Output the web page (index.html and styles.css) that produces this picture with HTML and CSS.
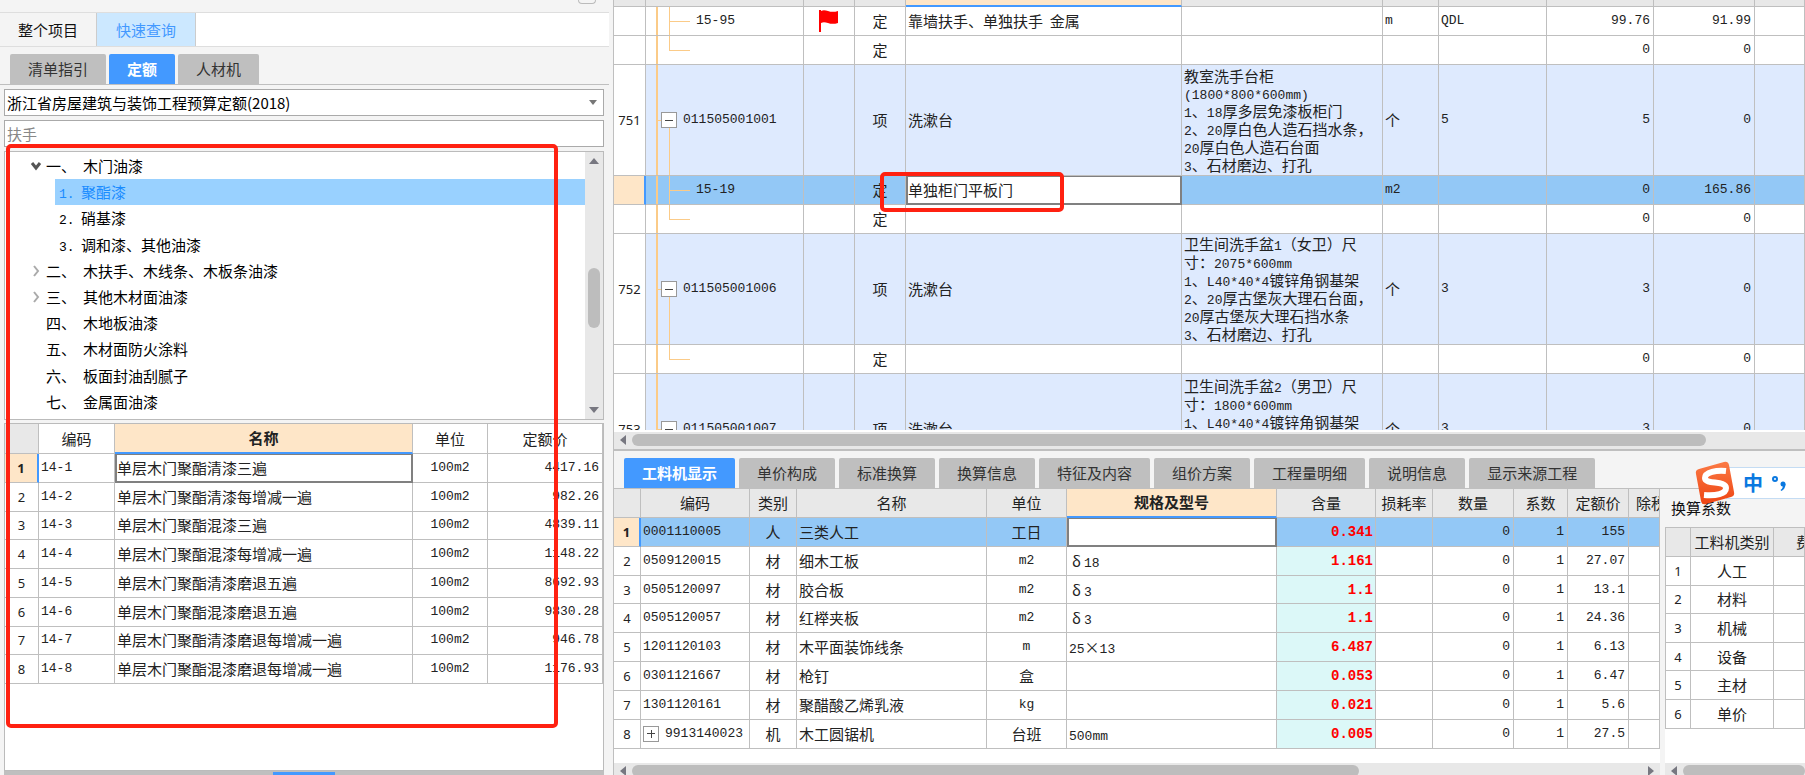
FILE: index.html
```html
<!DOCTYPE html>
<html lang="zh-CN">
<head>
<meta charset="utf-8">
<title>快速查询</title>
<link rel="stylesheet" href="styles.css">
</head>
<body>
<div class="app">
  <aside class="side">
    <div class="side-top"><button class="pin" aria-label="固定"></button></div>
    <nav class="modes">
      <button class="mode">整个项目</button>
      <button class="mode mode-on">快速查询</button>
    </nav>
    <nav class="tabs tabs-side">
      <button class="tab">清单指引</button>
      <button class="tab tab-on">定额</button>
      <button class="tab">人材机</button>
    </nav>
    <div class="side-body">
      <div class="picker">
        <select class="field" aria-label="定额库"><option>浙江省房屋建筑与装饰工程预算定额(2018)</option></select>
        <svg class="picker-arrow" width="8" height="5" viewBox="0 0 8 5"><path d="M0 0h8L4 5z" fill="#777"/></svg>
      </div>
      <input class="field" type="text" placeholder="扶手" aria-label="搜索">
      <div class="tree-box">
        <ul class="tree">
          <li><svg class="chev" viewBox="0 0 12 12"><path d="M2 3l4 5 4-5" fill="none" stroke="#555" stroke-width="3"/></svg><span class="ord">一、</span>木门油漆</li>
          <li class="leaf leaf-on"><span class="ord"><span class="n">1.</span></span>聚酯漆</li>
          <li class="leaf"><span class="ord"><span class="n">2.</span></span>硝基漆</li>
          <li class="leaf"><span class="ord"><span class="n">3.</span></span>调和漆、其他油漆</li>
          <li><svg class="chev" viewBox="0 0 12 12"><path d="M4 1l4 5-4 5" fill="none" stroke="#aaa" stroke-width="2"/></svg><span class="ord">二、</span>木扶手、木线条、木板条油漆</li>
          <li><svg class="chev" viewBox="0 0 12 12"><path d="M4 1l4 5-4 5" fill="none" stroke="#aaa" stroke-width="2"/></svg><span class="ord">三、</span>其他木材面油漆</li>
          <li><span class="chev"></span><span class="ord">四、</span>木地板油漆</li>
          <li><span class="chev"></span><span class="ord">五、</span>木材面防火涂料</li>
          <li><span class="chev"></span><span class="ord">六、</span>板面封油刮腻子</li>
          <li><span class="chev"></span><span class="ord">七、</span>金属面油漆</li>
        </ul>
        <div class="vbar">
          <svg width="10" height="6" viewBox="0 0 10 6"><path d="M0 6h10L5 0z" fill="#777780"/></svg>
          <div class="vtrack"><div class="vthumb"></div></div>
          <svg width="10" height="6" viewBox="0 0 10 6"><path d="M0 0h10L5 6z" fill="#777780"/></svg>
        </div>
      </div>
      <div class="quota-box">
        <table class="grid grid-quota">
          <colgroup><col class="w34"><col class="w76"><col><col class="w75"><col class="w115"></colgroup>
          <thead><tr><th class="corner"></th><th>编码</th><th class="col-on">名称</th><th>单位</th><th>定额价</th></tr></thead>
          <tbody>
            <tr><td class="no no-on">1</td><td class="n">14-1</td><td class="cell-on">单层木门聚酯清漆三遍</td><td class="n c">100m2</td><td class="n r">4417.16</td></tr>
            <tr><td class="no">2</td><td class="n">14-2</td><td>单层木门聚酯清漆每增减一遍</td><td class="n c">100m2</td><td class="n r">982.26</td></tr>
            <tr><td class="no">3</td><td class="n">14-3</td><td>单层木门聚酯混漆三遍</td><td class="n c">100m2</td><td class="n r">4839.11</td></tr>
            <tr><td class="no">4</td><td class="n">14-4</td><td>单层木门聚酯混漆每增减一遍</td><td class="n c">100m2</td><td class="n r">1148.22</td></tr>
            <tr><td class="no">5</td><td class="n">14-5</td><td>单层木门聚酯清漆磨退五遍</td><td class="n c">100m2</td><td class="n r">8692.93</td></tr>
            <tr><td class="no">6</td><td class="n">14-6</td><td>单层木门聚酯混漆磨退五遍</td><td class="n c">100m2</td><td class="n r">9830.28</td></tr>
            <tr><td class="no">7</td><td class="n">14-7</td><td>单层木门聚酯清漆磨退每增减一遍</td><td class="n c">100m2</td><td class="n r">946.78</td></tr>
            <tr><td class="no">8</td><td class="n">14-8</td><td>单层木门聚酯混漆磨退每增减一遍</td><td class="n c">100m2</td><td class="n r">1176.93</td></tr>
          </tbody>
        </table>
      </div>
      <div class="side-foot"><span class="grip"></span></div>
    </div>
    <div class="mark mark-side"></div>
  </aside>

  <main class="main">
    <section class="upper">
      <div class="clip">
        <table class="grid grid-bill">
          <colgroup><col class="w32"><col class="w158"><col class="w51"><col class="w51"><col class="w276"><col class="w201"><col class="w56"><col class="w108"><col class="w107"><col class="w101"><col></colgroup>
          <thead><tr><th></th><th></th><th></th><th></th><th class="col-on"></th><th></th><th></th><th></th><th></th><th></th><th></th></tr></thead>
          <tbody>
            <tr><td></td><td class="n kid">15-95</td><td class="c"><svg class="flag" width="22" height="24" viewBox="0 0 22 24"><path d="M2 1v22" stroke="#f00" stroke-width="2"/><path d="M3 2c5-3 8 3 17 0v12c-9 3-12-3-17 0z" fill="#f00"/></svg></td><td class="c">定</td><td>靠墙扶手、单独扶手&nbsp; 金属</td><td></td><td class="n">m</td><td class="n">QDL</td><td class="n r">99.76</td><td class="n r">91.99</td><td></td></tr>
            <tr><td></td><td class="kid kid-last"></td><td></td><td class="c">定</td><td></td><td></td><td></td><td></td><td class="n r">0</td><td class="n r">0</td><td></td></tr>
            <tr class="item"><td class="no">751</td><td class="n top"><span class="node"><button class="fold" aria-label="折叠"></button>011505001001</span></td><td></td><td class="c">项</td><td>洗漱台</td><td class="desc">教室洗手台柜<br><span class="n">(1800*800*600mm)</span><br><span class="n">1</span>、<span class="n">18</span>厚多层免漆板柜门<br><span class="n">2</span>、<span class="n">20</span>厚白色人造石挡水条，<br><span class="n">20</span>厚白色人造石台面<br><span class="n">3</span>、石材磨边、打孔</td><td>个</td><td class="n">5</td><td class="n r">5</td><td class="n r">0</td><td></td></tr>
            <tr class="row-on"><td class="no no-on"></td><td class="n kid">15-19</td><td></td><td class="c">定</td><td class="cell-on"><div class="hold">单独柜门平板门<div class="mark mark-cell"></div></div></td><td></td><td class="n">m2</td><td></td><td class="n r">0</td><td class="n r">165.86</td><td></td></tr>
            <tr><td></td><td class="kid kid-last"></td><td></td><td class="c">定</td><td></td><td></td><td></td><td></td><td class="n r">0</td><td class="n r">0</td><td></td></tr>
            <tr class="item"><td class="no">752</td><td class="n top"><span class="node"><button class="fold" aria-label="折叠"></button>011505001006</span></td><td></td><td class="c">项</td><td>洗漱台</td><td class="desc">卫生间洗手盆<span class="n">1</span>（女卫）尺<br>寸：<span class="n">2075*600mm</span><br><span class="n">1</span>、<span class="n">L40*40*4</span>镀锌角钢基架<br><span class="n">2</span>、<span class="n">20</span>厚古堡灰大理石台面，<br><span class="n">20</span>厚古堡灰大理石挡水条<br><span class="n">3</span>、石材磨边、打孔</td><td>个</td><td class="n">3</td><td class="n r">3</td><td class="n r">0</td><td></td></tr>
            <tr><td></td><td class="kid kid-last"></td><td></td><td class="c">定</td><td></td><td></td><td></td><td></td><td class="n r">0</td><td class="n r">0</td><td></td></tr>
            <tr class="item"><td class="no">753</td><td class="n top"><span class="node"><button class="fold" aria-label="折叠"></button>011505001007</span></td><td></td><td class="c">项</td><td>洗漱台</td><td class="desc desc-top">卫生间洗手盆<span class="n">2</span>（男卫）尺<br>寸：<span class="n">1800*600mm</span><br><span class="n">1</span>、<span class="n">L40*40*4</span>镀锌角钢基架</td><td>个</td><td class="n">3</td><td class="n r">3</td><td class="n r">0</td><td></td></tr>
          </tbody>
        </table>
      </div>
      <div class="hbar"><svg width="6" height="10" viewBox="0 0 6 10"><path d="M6 0v10L0 5z" fill="#777780"/></svg><div class="htrack"><div class="hthumb hthumb-bill"></div></div></div>
    </section>

    <section class="lower">
      <nav class="tabs">
        <button class="tab tab-on">工料机显示</button>
        <button class="tab">单价构成</button>
        <button class="tab">标准换算</button>
        <button class="tab">换算信息</button>
        <button class="tab">特征及内容</button>
        <button class="tab">组价方案</button>
        <button class="tab">工程量明细</button>
        <button class="tab">说明信息</button>
        <button class="tab">显示来源工程</button>
      </nav>
      <div class="split">
        <div class="pane pane-res">
          <div class="clip">
            <table class="grid grid-res">
              <colgroup><col class="w27"><col class="w109"><col class="w47"><col class="w190"><col class="w80"><col class="w210"><col class="w99"><col class="w57"><col class="w81"><col class="w54"><col class="w61"><col></colgroup>
              <thead><tr><th></th><th>编码</th><th>类别</th><th>名称</th><th>单位</th><th class="col-on">规格及型号</th><th>含量</th><th>损耗率</th><th>数量</th><th>系数</th><th>定额价</th><th class="cut cut-tax">除税价</th></tr></thead>
              <tbody>
                <tr class="row-on"><td class="no no-on">1</td><td class="n">0001110005</td><td class="c">人</td><td>三类人工</td><td class="c">工日</td><td class="cell-on"></td><td class="qty">0.341</td><td></td><td class="n r">0</td><td class="n r">1</td><td class="n r">155</td><td></td></tr>
                <tr><td class="no">2</td><td class="n">0509120015</td><td class="c">材</td><td>细木工板</td><td class="n c">m2</td><td><span class="sym">δ</span><span class="n">18</span></td><td class="qty">1.161</td><td></td><td class="n r">0</td><td class="n r">1</td><td class="n r">27.07</td><td></td></tr>
                <tr><td class="no">3</td><td class="n">0505120097</td><td class="c">材</td><td>胶合板</td><td class="n c">m2</td><td><span class="sym">δ</span><span class="n">3</span></td><td class="qty">1.1</td><td></td><td class="n r">0</td><td class="n r">1</td><td class="n r">13.1</td><td></td></tr>
                <tr><td class="no">4</td><td class="n">0505120057</td><td class="c">材</td><td>红榉夹板</td><td class="n c">m2</td><td><span class="sym">δ</span><span class="n">3</span></td><td class="qty">1.1</td><td></td><td class="n r">0</td><td class="n r">1</td><td class="n r">24.36</td><td></td></tr>
                <tr><td class="no">5</td><td class="n">1201120103</td><td class="c">材</td><td>木平面装饰线条</td><td class="n c">m</td><td><span class="n">25</span><span class="sym">×</span><span class="n">13</span></td><td class="qty">6.487</td><td></td><td class="n r">0</td><td class="n r">1</td><td class="n r">6.13</td><td></td></tr>
                <tr><td class="no">6</td><td class="n">0301121667</td><td class="c">材</td><td>枪钉</td><td class="c">盒</td><td></td><td class="qty">0.053</td><td></td><td class="n r">0</td><td class="n r">1</td><td class="n r">6.47</td><td></td></tr>
                <tr><td class="no">7</td><td class="n">1301120161</td><td class="c">材</td><td>聚醋酸乙烯乳液</td><td class="n c">kg</td><td></td><td class="qty">0.021</td><td></td><td class="n r">0</td><td class="n r">1</td><td class="n r">5.6</td><td></td></tr>
                <tr><td class="no">8</td><td class="n"><span class="node"><button class="fold fold-plus" aria-label="展开"></button>9913140023</span></td><td class="c">机</td><td>木工圆锯机</td><td class="c">台班</td><td><span class="n">500mm</span></td><td class="qty">0.005</td><td></td><td class="n r">0</td><td class="n r">1</td><td class="n r">27.5</td><td></td></tr>
              </tbody>
            </table>
          </div>
          <div class="hbar"><svg width="6" height="10" viewBox="0 0 6 10"><path d="M6 0v10L0 5z" fill="#777780"/></svg><div class="htrack"><div class="hthumb hthumb-res"></div></div><svg width="6" height="10" viewBox="0 0 6 10"><path d="M0 0v10l6-5z" fill="#777780"/></svg></div>
        </div>
        <div class="pane pane-coef">
          <h2 class="coef-title">换算系数</h2>
          <div class="clip">
            <table class="grid grid-coef">
              <colgroup><col class="w25"><col class="w83"><col></colgroup>
              <thead><tr><th></th><th class="cut">工料机类别</th><th class="fee">费</th></tr></thead>
              <tbody>
                <tr><td class="no">1</td><td class="c">人工</td><td></td></tr>
                <tr><td class="no">2</td><td class="c">材料</td><td></td></tr>
                <tr><td class="no">3</td><td class="c">机械</td><td></td></tr>
                <tr><td class="no">4</td><td class="c">设备</td><td></td></tr>
                <tr><td class="no">5</td><td class="c">主材</td><td></td></tr>
                <tr><td class="no">6</td><td class="c">单价</td><td></td></tr>
              </tbody>
            </table>
          </div>
          <div class="hbar"><svg width="6" height="10" viewBox="0 0 6 10"><path d="M6 0v10L0 5z" fill="#777780"/></svg><div class="htrack"><div class="hthumb hthumb-coef"></div></div></div>
        </div>
      </div>
      <div class="ime">
        <svg class="ime-logo" width="40" height="44" viewBox="0 0 40 44">
          <defs><linearGradient id="og" x1="0" y1="0" x2="0" y2="1"><stop offset="0" stop-color="#fb7a45"/><stop offset="1" stop-color="#ee4412"/></linearGradient></defs>
          <path d="M4 8L29 1q4-1 5 3l5 27q1 4-3 5L11 43q-4 1-5-3L1 13q-1-4 3-5z" fill="url(#og)"/>
          <path d="M31 10C22 9 10 11 10 17c0 7 21 2 21 10 0 6-10 8-22 7" fill="none" stroke="#fff" stroke-width="6"/>
        </svg>
        <span class="ime-zh">中</span>
        <svg width="18" height="18" viewBox="0 0 18 18"><circle cx="4" cy="5" r="2" fill="none" stroke="#0a78e0" stroke-width="2"/><circle cx="12" cy="10" r="2.500" fill="#0a78e0"/><path d="M14.500 10q0 5-4 7l-1-1q3-2 2-5z" fill="#0a78e0"/></svg>
      </div>
    </section>
  </main>
</div>
</body>
</html>
```
FILE: styles.css
```css
* { box-sizing: border-box; }
body {
  margin: 0;
  font: 15px/18px "Noto Sans CJK SC", sans-serif;
  color: #222;
  background: #f4f4f4;
}
button { font: inherit; color: inherit; border: 0; padding: 0; background: none; }
.n { font-family: "Liberation Mono", "Noto Sans CJK SC", monospace; font-size: 13px; }
span.n { line-height: 1; }

.app { display: flex; height: 100vh; overflow: hidden; }

/* left panel */
.side { position: relative; display: flex; flex-direction: column; flex: 0 0 609px; }
.side-top { display: flex; justify-content: flex-end; height: 13px; padding-right: 13px; border-bottom: 1px solid #dedede; }
.pin { width: 18px; height: 4px; border: 1px solid #bbb; border-top: 0; border-radius: 0 0 4px 4px; }
.modes { display: flex; height: 34px; background: #fff; border-bottom: 1px solid #dedede; }
.mode { padding: 0 18px; border-right: 1px solid #ccc; background: #f4f4f4; color: #111; }
.mode-on { padding: 0 19px; background: #cce8ff; color: #4399ff; }
.tabs { display: flex; gap: 4px; padding: 7px 10px 0; border-bottom: 1px solid #bfbfbf; }
.tab { height: 30px; padding: 0 18px; border-radius: 2px 2px 0 0; background: #bfbfbf; color: #333; white-space: nowrap; }
.tab-on { background: #4399ff; color: #fff; font-weight: 600; }
.tabs-side { gap: 3px; }
.side-body { display: flex; flex-direction: column; flex: 1; min-height: 0; padding: 4px 5px 0 4px; }
.picker { position: relative; }
.picker-arrow { position: absolute; right: 7px; top: 11px; pointer-events: none; }
.field {
  display: block; width: 100%; height: 27px; margin-bottom: 4px; padding: 0 2px;
  border: 1px solid #aaa; border-radius: 0; background: #fff; color: #000;
  font: inherit; appearance: none;
}
.field::placeholder { color: #888; }
.tree-box { display: flex; flex: 0 0 269px; border: 1px solid #bbb; background: #fff; }
.tree { display: grid; grid-auto-rows: 1fr; flex: 1; margin: 0; padding: 1px 0 4px; list-style: none; color: #000; }
.tree li { display: flex; align-items: center; padding-left: 25px; }
.chev { width: 12px; height: 12px; margin-right: 4px; }
.ord { width: 37px; }
.tree .leaf { margin-left: 50px; padding-left: 4px; }
.leaf .ord { width: 22px; }
.tree .leaf-on { background: #99d1ff; color: #1a8cff; }
.vbar { display: flex; flex-direction: column; align-items: center; width: 18px; padding: 6px 0; background: #e8e8e8; }
.vtrack { flex: 1; padding-top: 104px; }
.vthumb { width: 12px; height: 60px; border-radius: 6px; background: #bdbdbd; }
.quota-box { flex: 1; min-height: 0; margin-top: 3px; overflow: hidden; border: 1px solid #bbb; background: #fff; }
.side-foot { display: flex; justify-content: center; align-items: flex-end; height: 4px; background: #bfbfbf; }
.grip { width: 62px; height: 3px; background: #4399ff; }

.mark { position: absolute; border: 4px solid #ff2111; border-radius: 5px; pointer-events: none; }
.mark-side { left: 6px; top: 144px; width: 552px; height: 584px; }
.mark-cell { left: -28px; top: -9px; width: 184px; height: 40px; }

/* data grids */
.grid { width: 100%; table-layout: fixed; border-collapse: separate; border-spacing: 0; background: #fff; }
.grid tr { height: 28px; }
.grid th, .grid td { padding: 0 2px; border-right: 1px solid #bfbfbf; border-bottom: 1px solid #bfbfbf; text-align: left; white-space: nowrap; }
.grid th { height: 29px; padding: 0; background: #e8e8e8; font-weight: 400; text-align: center; }
.grid .c { text-align: center; }
.grid .r { padding-right: 3px; text-align: right; }
.grid .no { padding: 0; text-align: center; font: 13px/18px "Noto Sans", sans-serif; }
.grid .col-on { background: #fee6c8; border-bottom: 2px solid #4399ff; font-weight: 700; }
.grid .no-on { background: #fee6c8; border-right: 2px solid #4399ff; font-weight: 700; }
.row-on td { background-color: #93c8f6; }
.grid .cell-on { padding: 0; background: #fff; border: 2px solid #808080; border-top-width: 1px; }
.grid .cut { overflow: hidden; }
.grid .cut-tax { padding-left: 7px; text-align: left; }
.clip { flex: 1; min-height: 0; overflow: hidden; background: #fff; }

.grid-quota { height: 260px; }
.grid-quota th { height: 30px; background: #fff; }
.grid-quota .corner { background: #e8e8e8; }
.grid-quota .col-on { background: #fee6c8; }

.w25 { width: 25px; } .w27 { width: 27px; } .w32 { width: 32px; } .w34 { width: 34px; }
.w47 { width: 47px; } .w51 { width: 51px; } .w54 { width: 54px; } .w56 { width: 56px; }
.w57 { width: 57px; } .w61 { width: 61px; } .w75 { width: 75px; } .w76 { width: 76px; }
.w80 { width: 80px; } .w81 { width: 81px; } .w83 { width: 83px; } .w99 { width: 99px; }
.w101 { width: 101px; } .w107 { width: 107px; } .w108 { width: 108px; } .w109 { width: 109px; }
.w115 { width: 115px; } .w158 { width: 158px; } .w190 { width: 190px; } .w201 { width: 201px; }
.w210 { width: 210px; } .w276 { width: 276px; }

/* main area */
.main { display: flex; flex-direction: column; flex: 1; min-width: 0; margin-left: 4px; border-left: 1px solid #bfbfbf; }
.upper { display: flex; flex-direction: column; flex: 18; min-height: 0; border-bottom: 2px solid #bfbfbf; }
.grid-bill thead tr, .grid-bill th { height: 7px; }
.grid-bill tbody tr { height: 29px; }
.grid-bill tbody .item { height: 111px; }
.item td { background-color: #deeafe; }
.item .no { background: #fff; }
.grid-bill .desc { line-height: 17px; }
.grid-bill .desc-top { padding-top: 3px; vertical-align: top; }
.grid-bill .kid, .grid-bill .top {
  --c: linear-gradient(#fbcb88, #fbcb88);
  background-image: var(--c), var(--c), var(--c);
  background-repeat: no-repeat;
}
.grid-bill .kid { padding-left: 50px; background-position: 10px 0, 23px 0, 23px 50%; background-size: 2px 100%, 1px 100%, 21px 1px; }
.grid-bill .kid-last { background-size: 2px 100%, 1px 50%, 21px 1px; }
.grid-bill .top { padding-left: 15px; background-position: 10px 0, 23px 100%, 10px 50%; background-size: 2px 100%, 1px 50%, 8px 1px; }
.node { display: flex; align-items: center; gap: 6px; }
.fold {
  --k: linear-gradient(#444, #444);
  flex: none; width: 16px; height: 16px; border: 1px solid #999;
  background: var(--k) center / 8px 1px no-repeat, #fff;
}
.fold-plus { background: var(--k) center / 8px 1px no-repeat, var(--k) center / 1px 8px no-repeat, #fff; }
.flag { display: block; margin: 0 auto; }
.hold { position: relative; }

.hbar { display: flex; align-items: center; gap: 6px; flex: none; height: 19px; padding: 0 6px; background: #e8e8e8; border-top: 2px solid #fff; }
.htrack { flex: 1; }
.hthumb { height: 12px; border-radius: 6px; background: #bdbdbd; }
.hthumb-bill { width: 92%; }
.hthumb-res { width: 72%; }
.hthumb-coef { width: 100%; }

.lower { position: relative; display: flex; flex-direction: column; flex: 13; min-height: 0; }
.split { display: flex; gap: 5px; flex: 1; min-height: 0; }
.pane { display: flex; flex-direction: column; min-width: 0; }
.pane .hbar { height: 12px; padding-top: 3px; border-top: 0; }
.pane-res { flex: 1; }
.pane-coef { flex: 0 0 140px; overflow: hidden; }
.grid-res { height: 260px; }
.grid-res .qty { background-color: #dcf8f8; color: #f00; text-align: right; font: 700 14px/18px "Liberation Mono", monospace; }
.grid-res .row-on .qty { background-color: #93c8f6; }
.sym { display: inline-block; width: 15px; line-height: 1; text-align: center; }
.coef-title { margin: 0; padding: 10px 6px; font: inherit; color: #111; }
.grid-coef { height: 202px; border-top: 1px solid #bfbfbf; border-left: 1px solid #bfbfbf; }
.grid-coef .fee { overflow: hidden; padding-left: 22px; text-align: left; }
.pane-coef .hbar { padding-right: 0; }

.ime {
  position: absolute; right: 0; top: 16px; display: flex; align-items: center; gap: 8px;
  width: 79px; height: 32px; border: 1px solid #c4dcf3; border-right: 0; background: #fff;
}
.ime-logo { flex: none; margin-left: -32px; }
.ime-zh { font-size: 20px; font-weight: 700; color: #0a78e0; }
```
